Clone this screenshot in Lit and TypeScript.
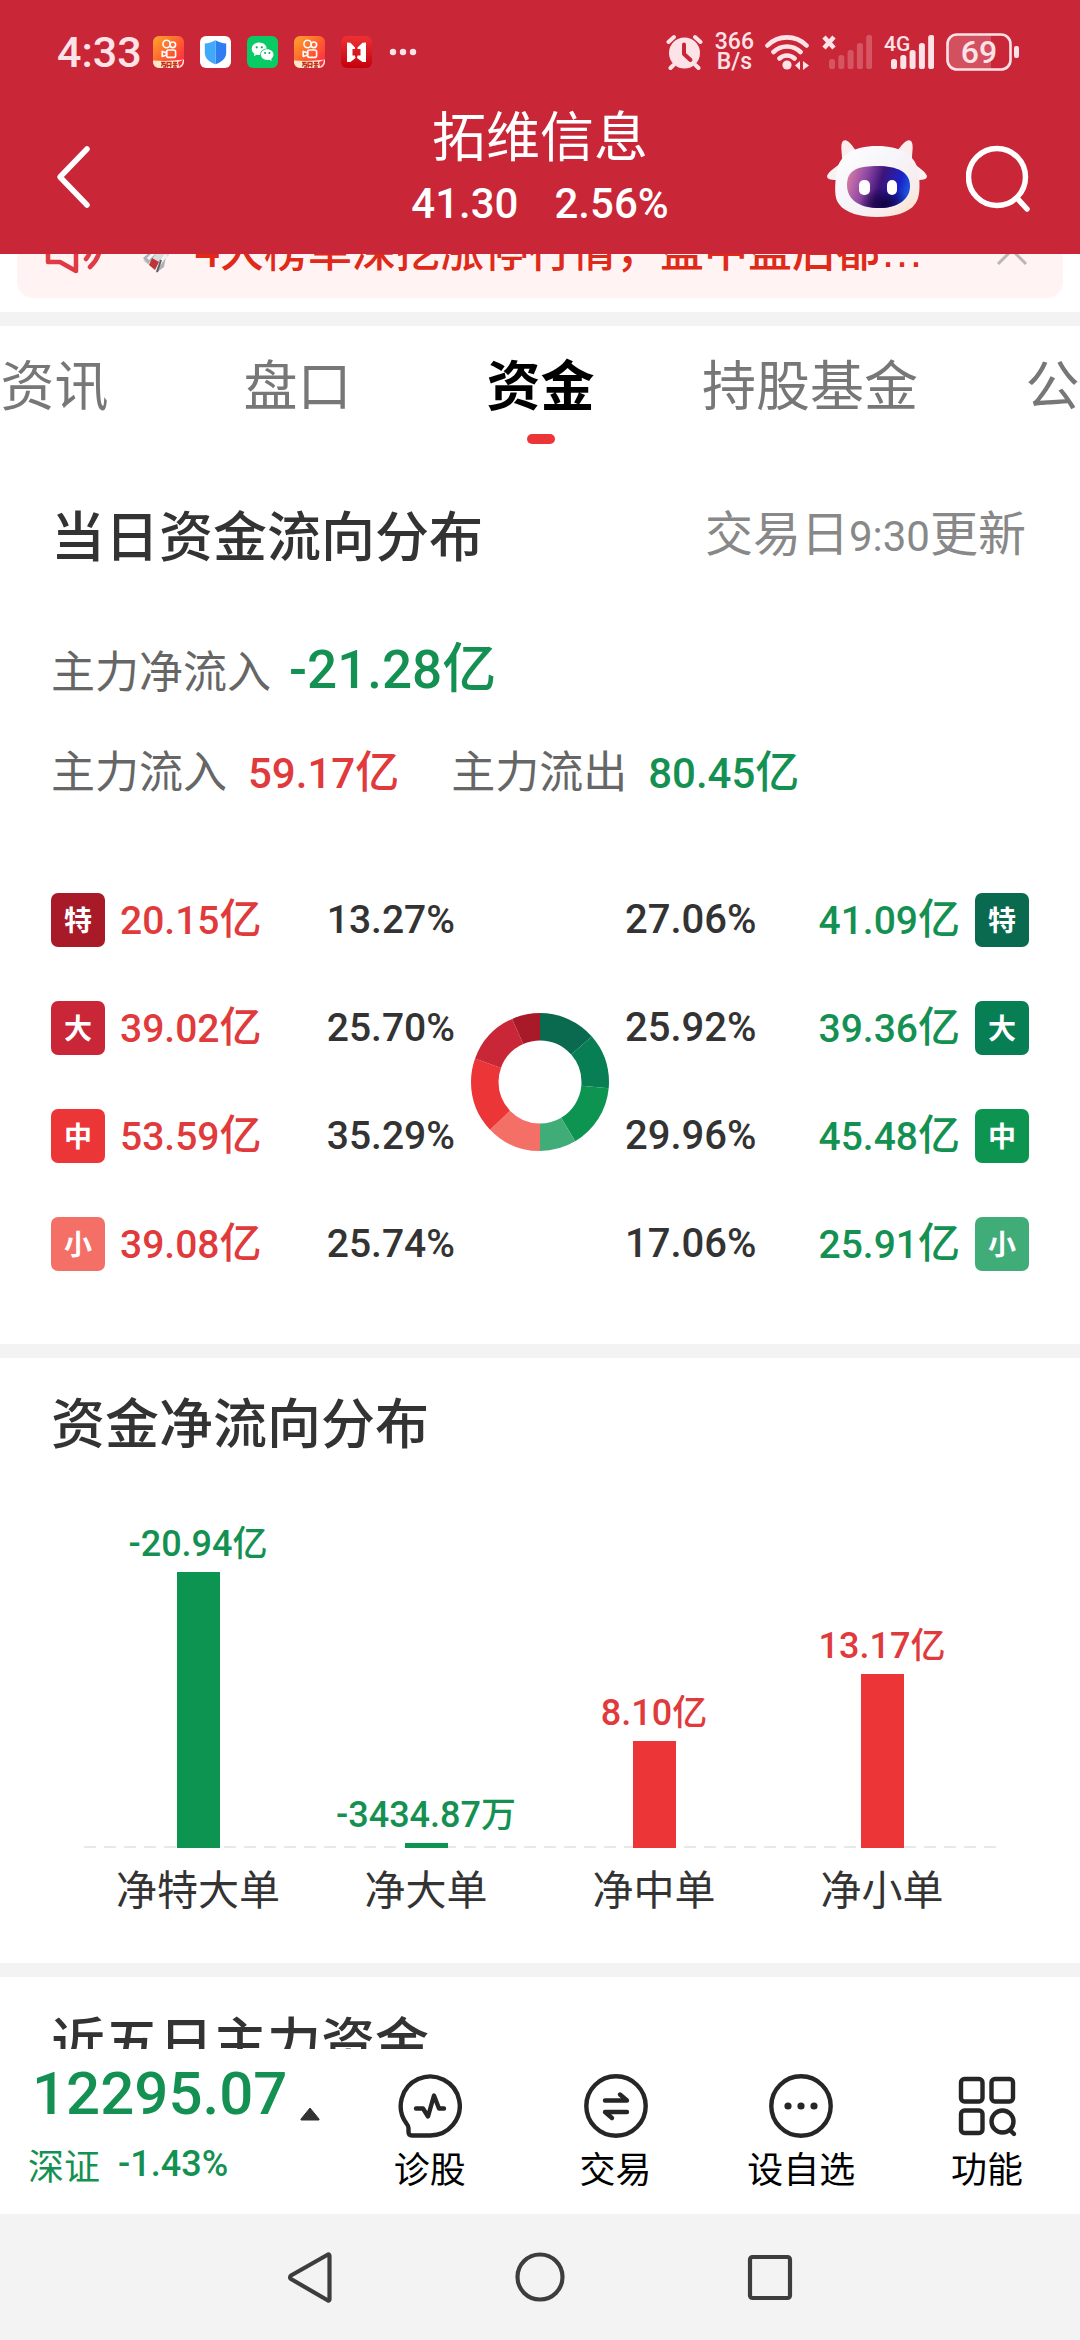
import { LitElement, html, svg, css, nothing } from "lit";
import { customElement, property, state } from "lit/decorators.js";
import { classMap } from "lit/directives/class-map.js";

type Tone = "up" | "down";
interface Flow { size: string; tier: number; amount: string; share: number; }
interface Net { label: string; value: number; amount: string; unit: string; }

const INFLOW: Flow[] = [
  { size: "特", tier: 1, amount: "20.15", share: 13.27 },
  { size: "大", tier: 2, amount: "39.02", share: 25.7 },
  { size: "中", tier: 3, amount: "53.59", share: 35.29 },
  { size: "小", tier: 4, amount: "39.08", share: 25.74 },
];
const OUTFLOW: Flow[] = [
  { size: "特", tier: 1, amount: "41.09", share: 27.06 },
  { size: "大", tier: 2, amount: "39.36", share: 25.92 },
  { size: "中", tier: 3, amount: "45.48", share: 29.96 },
  { size: "小", tier: 4, amount: "25.91", share: 17.06 },
];
const NET: Net[] = [
  { label: "净特大单", value: -20.94, amount: "-20.94", unit: "亿" },
  { label: "净大单", value: -0.343487, amount: "-3434.87", unit: "万" },
  { label: "净中单", value: 8.1, amount: "8.10", unit: "亿" },
  { label: "净小单", value: 13.17, amount: "13.17", unit: "亿" },
];
const TIER_COLORS: Record<Tone, string[]> = {
  up: ["#a91a29", "#c92637", "#ec3537", "#f47067"],
  down: ["#0a6a50", "#077e53", "#0e9451", "#40ad78"],
};

const base = css`
  :host { display: block; box-sizing: border-box; }
  * { box-sizing: border-box; }
  svg { display: block; flex: none; }
  button {
    border: 0; padding: 0; margin: 0; background: none; color: inherit;
    font: inherit; cursor: pointer;
  }
  h1, h2, p { margin: 0; font-weight: inherit; font-size: inherit; }
  .num { font-family: Roboto, "Noto Sans CJK SC", sans-serif; font-weight: 500; }
  .up { color: #e03a3c; }
  .down { color: #149152; }
`;

const kuaishou = svg`
  <defs><linearGradient id="ks" x1="0" y1="0" x2="1" y2="1">
    <stop offset="0" stop-color="#ffa62b"/><stop offset=".55" stop-color="#ff5a30"/><stop offset="1" stop-color="#fb1f4b"/>
  </linearGradient></defs>
  <rect width="31" height="32" rx="6" fill="url(#ks)"/>
  <g fill="none" stroke="#fff" stroke-width="1.6">
    <circle cx="13.6" cy="8" r="3.7"/><circle cx="19.8" cy="8.8" r="2.8"/>
    <rect x="13.6" y="14" width="9" height="7.4" rx="2"/>
    <path d="M9.2 15.4v5l4.4-1.4v-2.2z" stroke-linejoin="round"/>
  </g>
  <path d="M0 24.5q16 1.2 31-1v2.5a6 6 0 0 1-6 6H6a6 6 0 0 1-6-6z" fill="#fde7c8"/>
  <path d="M8 26.500h4.500M10 26.500l-1.500 4M10 28.500h2.500v2.500h-2.500M14 26.500h4v3h-4zM15 29.500l-1 2M17 29.500l1 2M20 26.500h4M19.500 28.500h5M20 31h4M22 26v5" stroke="#c2301c" stroke-width="1.300" fill="none"/>
  <path d="M25 26l5-2-1 4-3 3z" fill="#fb2a48"/>`;
const shield = svg`
  <rect width="31" height="32" rx="6" fill="#fff"/>
  <path d="M15.500 4.200c3.500 2 7 3 10.700 3.300v9.500c0 5.500-5 9.300-10.700 11.200z" fill="#2f7df0"/>
  <path d="M15.500 4.200c-3.500 2-7 3-10.700 3.300v9.500c0 5.500 5 9.300 10.700 11.200z" fill="#41aaf8"/>`;
const wechat = svg`
  <rect width="31" height="32" rx="6" fill="#08cb66"/>
  <path d="M12.200 6.500c-4.200 0-7.500 2.800-7.500 6.300 0 2 1 3.700 2.700 4.900l-.6 2.500 2.900-1.500c.8.200 1.600.3 2.500.3 4.200 0 7.500-2.700 7.500-6.200s-3.300-6.300-7.500-6.300z" fill="#fff"/>
  <ellipse cx="20" cy="18.600" rx="7" ry="6.200" fill="#08cb66"/>
  <path d="M20.200 13.200c-3.600 0-6.400 2.400-6.400 5.400s2.800 5.400 6.400 5.400c.8 0 1.500-.1 2.200-.3l2.300 1.200-.5-2c1.400-1 2.300-2.600 2.300-4.300 0-3-2.800-5.400-6.300-5.400z" fill="#fff"/>
  <g fill="#08a956"><circle cx="9.700" cy="11.300" r="1.100"/><circle cx="14.800" cy="11.300" r="1.100"/><circle cx="18.100" cy="17" r="1"/><circle cx="22.400" cy="17" r="1"/></g>`;
const news = svg`
  <defs><linearGradient id="nw" x1="0" y1="0" x2="0" y2="1">
    <stop offset="0" stop-color="#ee3034"/><stop offset="1" stop-color="#c4000c"/>
  </linearGradient></defs>
  <rect width="31" height="32" rx="6" fill="url(#nw)"/>
  <path d="M6 6.500l3.500.3L14 11.500v1.500h-2.500v6.500H14l.5 2.500-5 4L6 26zM25 6.500l-3.500.3L16.500 11.500v1.500h3v6.500h-3l-.5 2.500 5.500 4L25 26z" fill="#fff"/>`;

@customElement("status-bar")
class StatusBar extends LitElement {
  static styles = [base, css`
    .bar {
      display: flex; align-items: center; justify-content: space-between;
      height: 104px; padding: 0 60px 0 57px; color: #fde3e8;
      font-family: Roboto, sans-serif; font-weight: 500;
    }
    .side { display: flex; align-items: center; }
    .time { font-size: 43px; line-height: 46px; margin-right: 11px; }
    .apps { display: flex; gap: 16px; margin-right: 17px; }
    .alarm { margin-right: 12px; }
    .speed { display: flex; flex-direction: column; font-size: 23px; line-height: 20px; text-align: center; margin-right: 11px; }
    .wifi { margin-right: 12px; }
    .cell { margin-right: 12px; display: flex; }
    .level { font: 500 32px/32px Roboto, sans-serif; }
  `];
  render() {
    const bars = (opacity: number) => [0, 1, 2, 3, 4].map((i) => {
      const h = [10, 14, 19, 26, 34][i];
      return svg`<rect x=${7 + i * 9.3} y=${35 - h} width="6" height=${h} rx="2.600" opacity=${opacity}/>`;
    });
    return html`
      <div class="bar">
        <div class="side">
          <span class="time">4:33</span>
          <span class="apps">
            ${[kuaishou, shield, wechat, kuaishou, news].map((icon) => html`
              <svg width="31" height="32" viewBox="0 0 31 32" aria-hidden="true">${icon}</svg>`)}
          </span>
          <svg width="30" height="8" viewBox="0 0 30 8" fill="#fde3e8"><circle cx="4" cy="4" r="3.200"/><circle cx="14" cy="4" r="3.200"/><circle cx="24" cy="4" r="3.200"/></svg>
        </div>
        <div class="side">
          <svg class="alarm" width="37" height="36" viewBox="0 0 37 36">
            <circle cx="18.500" cy="19" r="15.500" fill="#fde3e8"/>
            <path d="M2.500 8l5.500-5M34.500 8l-5.500-5M7.500 31l-3 3M29.500 31l3 3" stroke="#fde3e8" stroke-width="4" stroke-linecap="round"/>
            <path d="M18 10.500v9.500l6.500 6" fill="none" stroke="#c92637" stroke-width="4" stroke-linecap="round" stroke-linejoin="round"/>
          </svg>
          <span class="speed"><span>366</span><span>B/s</span></span>
          <svg class="wifi" width="45" height="36" viewBox="0 0 45 36" fill="none" stroke="#fde3e8" stroke-width="4.600" stroke-linecap="round">
            <path d="M2.500 11.500a27.500 27.500 0 0 1 39 0M8.500 18a19.500 19.500 0 0 1 27 0M14.500 24.500a11 11 0 0 1 15 0"/>
            <circle cx="22" cy="31" r="4.600" fill="#fde3e8" stroke="none"/>
            <path d="M30 31.500l5-4.500v9zM44 31.500l-6-4.500v9z" fill="#fde3e8" stroke="none"/>
          </svg>
          <svg class="cell" width="50" height="36" viewBox="0 0 50 36" fill="#fde3e8">
            <path d="M2 3l10 11M12 3L2 14" stroke="#fde3e8" stroke-width="4.500"/>${bars(0.25)}
          </svg>
          <svg class="cell" width="50" height="36" viewBox="0 0 50 36" fill="#fde3e8">
            <text x="0" y="17" font-family="Roboto, sans-serif" font-size="21" font-weight="500">4G</text>${bars(1)}
          </svg>
          <svg width="74" height="38" viewBox="0 0 74 38">
            <path d="M10 1.500h35v35h-35a8.500 8.500 0 0 1-8.500-8.500v-18a8.500 8.500 0 0 1 8.500-8.500z" fill="#fff" opacity=".2"/>
            <rect x="1.500" y="1.500" width="63" height="35" rx="9.500" fill="none" stroke="#fde3e8" stroke-width="2.600"/>
            <rect x="68" y="13" width="5" height="12" rx="2" fill="#fde3e8"/>
            <text class="level" x="33" y="30" text-anchor="middle" fill="#fde3e8">69</text>
          </svg>
        </div>
      </div>`;
  }
}

@customElement("stock-header")
class StockHeader extends LitElement {
  static styles = [base, css`
    :host { background: #c92637; color: #fff; }
    .nav {
      display: grid; grid-template-columns: 1fr auto 1fr; align-items: center;
      min-height: 150px; padding: 0 48px;
    }
    .title { text-align: center; padding-bottom: 22px; }
    h1 { font-size: 54px; line-height: 60px; }
    .quote { display: flex; justify-content: center; gap: 36px; font-size: 42px; line-height: 56px; margin-top: 12px; }
    .actions { display: flex; justify-content: flex-end; align-items: center; gap: 36px; }
  `];
  render() {
    return html`
      <status-bar></status-bar>
      <div class="nav">
        <div>
          <button aria-label="返回">
            <svg width="50" height="64" viewBox="0 0 50 64" fill="none" stroke="#fff" stroke-width="5.500" stroke-linecap="round" stroke-linejoin="round"><path d="M39 4L12 32l27 28"/></svg>
          </button>
        </div>
        <div class="title">
          <h1>拓维信息</h1>
          <p class="quote num"><span>41.30</span><span>2.56%</span></p>
        </div>
        <div class="actions">
          <button aria-label="智能助手">
            <svg width="104" height="80" viewBox="0 0 104 80">
              <defs>
                <linearGradient id="face" x1="0" y1=".2" x2="1" y2=".4">
                  <stop offset="0" stop-color="#d97fa6"/><stop offset=".3" stop-color="#9048a4"/><stop offset=".55" stop-color="#3d1478"/><stop offset=".85" stop-color="#1a23c8"/><stop offset="1" stop-color="#1c52d8"/>
                </linearGradient>
                <radialGradient id="dark" cx=".6" cy=".9" r=".4"><stop offset="0" stop-color="#12003a"/><stop offset="1" stop-color="#12003a" stop-opacity="0"/></radialGradient>
                <linearGradient id="head" x1="0" y1="0" x2="1" y2="1">
                  <stop offset="0" stop-color="#fff"/><stop offset=".4" stop-color="#f6f6fa"/><stop offset=".75" stop-color="#f7ecee"/><stop offset="1" stop-color="#ffe0bb"/>
                </linearGradient>
              </defs>
              <path d="M16 22C12 28 3 31 1 37c0 4 5 4 12 4zM86 22c4 6 13 9 15 15 0 4-5 4-12 4z" fill="#f8f2f3"/>
              <path d="M16 20c0-8-2-14 1-18 4-3 9 4 13 10zM86 20c0-8 2-14-1-18-4-3-9 4-14 10z" fill="#fbeeee"/>
              <path d="M51 7c24 0 40 9 42 29 1 12 1 23-4 29-6 9-22 13-38 13s-32-4-38-13c-5-6-4-17-3-29C12 16 27 7 51 7z" fill="url(#head)"/>
              <path d="M52 27c19 0 32 6 32 20S71 69 53 69 21 62 21 46s12-19 31-19z" fill="url(#face)"/>
              <path d="M52 27c19 0 32 6 32 20S71 69 53 69 21 62 21 46s12-19 31-19z" fill="url(#dark)"/>
              <rect x="33" y="41" width="11" height="15" rx="5" fill="#fff"/><rect x="61" y="41" width="10" height="15" rx="5" fill="#fff"/>
            </svg>
          </button>
          <button aria-label="搜索">
            <svg width="66" height="68" viewBox="0 0 66 68" fill="none" stroke="#fff" stroke-width="5.500" stroke-linecap="round"><circle cx="31" cy="32" r="28.500"/><path d="M51 53l10 11"/></svg>
          </button>
        </div>
      </div>`;
  }
}

@customElement("notice-bar")
class NoticeBar extends LitElement {
  static styles = [base, css`
    :host { padding: 0 17px 14px; background: #fff; }
    .clip { display: flex; align-items: flex-end; height: 44px; overflow: hidden; }
    .notice {
      flex: 1; display: flex; align-items: center; height: 96px; padding: 0 34px 0 26px;
      background: #fff4f3; border-radius: 16px; color: #df2a1a;
    }
    .text { flex: 1; font-size: 44px; line-height: 60px; font-weight: 500; white-space: nowrap; }
    .more { font-family: "Liberation Sans", sans-serif; }
    .rocket { margin: 0 18px 0 36px; }
  `];
  render() {
    return html`<div class="clip"><div class="notice">
      <svg width="62" height="50" viewBox="0 0 62 50" fill="none" stroke="#e03a44" stroke-width="4.500" stroke-linejoin="round" stroke-linecap="round">
        <path d="M5 14h12L33 4v42L17 37H5zM43 34q7-8 3-20M47 42q15-14 8-35" />
      </svg>
      <svg class="rocket" width="36" height="50" viewBox="0 0 36 50">
        <path d="M34 2C22 4 14 14 10 26l12 8C30 26 36 14 34 2z" fill="#d5d8da"/>
        <path d="M30 8L28 30 14 44 2 36 10 26z" fill="#d9dbdc"/>
        <path d="M2 33l8-7 5 3-8 10zM15 48l3-13 7-4-2 11z" fill="#aeb2b4"/>
        <path d="M7 34l8-8M16 42l9-12" stroke="#f4f4f4" stroke-width="3"/>
        <path d="M11 33l7 4-4 8-6-5z" fill="#bf3438"/><path d="M20 35l-4 12" stroke="#5c6063" stroke-width="2"/>
      </svg>
      <span class="text">4大榜单深挖涨停行情，盘中盘后都<span class="more">…</span></span>
      <button aria-label="关闭"><svg width="34" height="34" viewBox="0 0 34 34" stroke="#bdb6b6" stroke-width="3"><path d="M3 3l28 28M31 3L3 31"/></svg></button>
    </div></div>`;
  }
}

@customElement("flow-donut")
class FlowDonut extends LitElement {
  static styles = [base];
  render() {
    const parts = [
      ...OUTFLOW.map((f, i) => ({ share: f.share, color: TIER_COLORS.down[i] })),
      ...INFLOW.map((f, i) => ({ share: f.share, color: TIER_COLORS.up[i] })).reverse(),
    ];
    let start = 0;
    return html`<svg width="138" height="138" viewBox="-69 -69 138 138" role="img" aria-label="资金流向占比">
      <g transform="rotate(-90)" fill="none" stroke-width="27.500">
        ${parts.map((p) => {
          const arc = svg`<circle r="55.250" pathLength="200" stroke=${p.color} stroke-dasharray="${p.share} 200" stroke-dashoffset=${-start}/>`;
          start += p.share;
          return arc;
        })}
      </g></svg>`;
  }
}

@customElement("flow-table")
class FlowTable extends LitElement {
  @property() tone: Tone = "up";
  @property({ attribute: false }) rows: Flow[] = [];
  static styles = [base, css`
    table { width: 100%; border-collapse: collapse; }
    tr { height: 108px; }
    th, td { padding: 0; font-weight: inherit; vertical-align: middle; }
    th { width: 54px; }
    .badge {
      display: flex; align-items: center; justify-content: center; width: 54px; height: 54px;
      border-radius: 7px; color: #fff; font-size: 28px; line-height: 28px; font-weight: 700; padding-bottom: 3px;
    }
    .amount { font-size: 39px; line-height: 54px; white-space: nowrap; font-weight: 500; }
    .unit { font-size: 42px; }
    .share { font-size: 39px; line-height: 54px; color: #333; font-weight: 500; }
    .in .amount { text-align: left; padding-left: 15px; }
    .in .share { text-align: right; }
    .out .amount { text-align: right; padding-right: 15px; }
    .out .share { text-align: left; font-size: 40px; }
    .up.t1 { background: #a91a29; } .up.t2 { background: #c92637; }
    .up.t3 { background: #ec3537; } .up.t4 { background: #f47067; }
    .down.t1 { background: #0a6a50; } .down.t2 { background: #077e53; }
    .down.t3 { background: #0e9451; } .down.t4 { background: #40ad78; }
    .badge.up, .badge.down { color: #fff; }
  `];
  render() {
    const inflow = this.tone === "up";
    return html`<table class=${inflow ? "in" : "out"}>
      ${this.rows.map((r) => {
        const cells = [
          html`<th scope="row"><span class=${classMap({ badge: true, [this.tone]: true, ["t" + r.tier]: true })}>${r.size}</span></th>`,
          html`<td class="amount num ${this.tone}">${r.amount}<span class="unit">亿</span></td>`,
          html`<td class="share num">${r.share.toFixed(2)}%</td>`,
        ];
        return html`<tr>${inflow ? cells : cells.reverse()}</tr>`;
      })}
    </table>`;
  }
}

@customElement("net-chart")
class NetChart extends LitElement {
  static styles = [base, css`
    :host { padding: 0 84px; }
    .plot {
      display: grid; grid-template-columns: repeat(4, 1fr); align-items: end; min-height: 360px;
      background: repeating-linear-gradient(90deg, #e8e8e8 0 12px, transparent 12px 20px) left bottom / 100% 2px no-repeat;
    }
    .col { display: flex; flex-direction: column; align-items: center; }
    .value { font-size: 36px; line-height: 54px; white-space: nowrap; }
    .unit { font-size: 35px; }
    .bar { width: 43px; }
    .bar.up { background: #ec3537; }
    .bar.down { background: #0e9451; }
    .axis { display: grid; grid-template-columns: repeat(4, 1fr); text-align: center; font-size: 41px; line-height: 60px; color: #333; padding-top: 9px; }
  `];
  render() {
    const peak = Math.max(...NET.map((n) => Math.abs(n.value)));
    return html`
      <div class="plot">
        ${NET.map((n) => {
          const tone = n.value < 0 ? "down" : "up";
          const h = Math.round((Math.abs(n.value) / peak) * 276);
          return html`<div class="col">
            <span class="value num ${tone}">${n.amount}<span class="unit">${n.unit}</span></span>
            <div class="bar ${tone}" style="height:${h}px"></div>
          </div>`;
        })}
      </div>
      <div class="axis">${NET.map((n) => html`<span>${n.label}</span>`)}</div>`;
  }
}

const toolIcons = {
  diagnose: svg`<path d="M32 61.500H14q-3.500 0-3.500-3.500v-4q0-2-2-4.500A29.500 29.500 0 1 1 32 61.500z"/><path d="M18 34.500h7l5 8 6-21 5 13h5"/>`,
  trade: svg`<circle cx="32" cy="32" r="29.700"/><path d="M21 26.500h22l-7-6M43 38H21l7 6"/>`,
  more: svg`<circle cx="32" cy="32" r="29.700"/><g fill="#262626" stroke="none"><circle cx="19" cy="32" r="3.600"/><circle cx="32" cy="32" r="3.600"/><circle cx="45" cy="32" r="3.600"/></g>`,
  features: svg`<rect x="6" y="5" width="21.500" height="22.500" rx="3.500"/><rect x="36.500" y="5" width="21.500" height="22.500" rx="3.500"/><rect x="6" y="36.500" width="21.500" height="22.500" rx="3.500"/><circle cx="47.500" cy="47.500" r="11"/><path d="M55 56l4 4"/>`,
};

@customElement("bottom-bar")
class BottomBar extends LitElement {
  static styles = [base, css`
    .tools { display: flex; min-height: 165px; background: #fff; }
    .index { width: 337px; flex: none; padding: 0 0 9px 28px; text-align: left; color: #149152; }
    .line { display: flex; align-items: flex-end; gap: 13px; }
    .points { font-size: 60px; line-height: 64px; padding-left: 4px; }
    .change { display: flex; align-items: center; gap: 18px; font-size: 36px; line-height: 56px; margin-top: 10px; }
    .tool {
      flex: 1; display: flex; flex-direction: column; align-items: center;
      padding-top: 25px; gap: 3px; font-size: 36px; line-height: 52px; color: #000;
    }
    .arrow { margin-bottom: 5px; }
    .system { display: flex; justify-content: center; align-items: center; gap: 166px; height: 126px; background: #f3f3f3; }
  `];
  render() {
    const tools = [["诊股", toolIcons.diagnose], ["交易", toolIcons.trade], ["设自选", toolIcons.more], ["功能", toolIcons.features]];
    return html`
      <div class="tools">
        <button class="index">
          <span class="line"><span class="points num">12295.07</span>
            <svg class="arrow" width="20" height="14" viewBox="0 0 20 14"><path d="M10 1l9 11v1H1v-1z" fill="#333" stroke="#333" stroke-linejoin="round"/></svg></span>
          <span class="change"><span>深证</span><span class="num">-1.43%</span></span>
        </button>
        ${tools.map(([label, icon]) => html`<button class="tool">
          <svg width="64" height="64" viewBox="0 0 64 64" fill="none" stroke="#262626" stroke-width="4.400" stroke-linecap="round" stroke-linejoin="round">${icon}</svg>
          <span>${label}</span></button>`)}
      </div>
      <div class="system">
        <button aria-label="返回上一页"><svg width="64" height="64" viewBox="0 0 64 64" fill="none" stroke="#3d3d3d" stroke-width="4.200" stroke-linejoin="round"><path d="M13 30.500L50 9.500q1.500-.5 1.500 1.500v43q0 2-1.500 1.500L13 34q-2-1.500 0-3.500z"/></svg></button>
        <button aria-label="主屏幕"><svg width="64" height="64" viewBox="0 0 64 64" fill="none" stroke="#3d3d3d" stroke-width="4.200"><circle cx="32" cy="32" r="22.500"/></svg></button>
        <button aria-label="最近任务"><svg width="64" height="64" viewBox="0 0 64 64" fill="none" stroke="#3d3d3d" stroke-width="4.200"><rect x="12" y="12" width="40" height="41" rx="2.500"/></svg></button>
      </div>`;
  }
}

@customElement("app-root")
class AppRoot extends LitElement {
  @state() private active = "资金";
  static styles = [base, css`
    :host {
      display: flex; flex-direction: column; height: 100vh; overflow: hidden; background: #fff;
      font-family: "Noto Sans CJK SC", sans-serif; color: #333;
    }
    stock-header, bottom-bar { flex: none; }
    main { flex: 1; min-height: 0; overflow: hidden; background: #f3f3f3; display: flex; flex-direction: column; gap: 14px; }
    main > * { flex: none; }
    section { background: #fff; }
    .tabs { display: flex; align-items: flex-start; margin-left: -67px; overflow: hidden; padding-bottom: 46px; color: #777; }
    .tab {
      flex: none; display: flex; flex-direction: column; align-items: center; min-width: 243px; padding: 23px 40px 0;
      font-size: 54px; line-height: 68px;
    }
    .tab.active { color: #000; font-weight: 700; }
    .marker { width: 28px; height: 10px; border-radius: 5px; background: #ec3537; margin-top: 17px; }
    .head { display: flex; justify-content: space-between; align-items: center; padding: 0 54px 0 51px; line-height: 80px; }
    h2 { font-size: 54px; font-weight: 500; line-height: 80px; }
    .note { font-size: 48px; color: #888; }
    .clock { font-family: Roboto, sans-serif; font-size: 42px; }
    .sum { display: flex; align-items: baseline; padding: 0 51px; font-size: 44px; color: #666; line-height: 64px; }
    .net { margin-top: 60px; }
    .both { margin-top: 35px; }
    .big { font-size: 53px; margin-left: 18px; }
    .big .unit { font-size: 54px; }
    .mid { font-size: 42px; margin-left: 21px; }
    .mid .unit { font-size: 44px; }
    .gap { margin-left: 52px; }
    .flows { display: grid; grid-template-columns: 1fr 138px 1fr; gap: 16px; align-items: center; padding: 60px 51px 46px; }
    .second { padding: 23px 0 20px; }
    .second net-chart { margin-top: 27px; padding-bottom: 26px; }
    .third { padding-top: 23px; }
  `];
  render() {
    return html`
      <stock-header></stock-header>
      <main>
        <notice-bar></notice-bar>
        <section>
          <div class="tabs" role="tablist">
            ${["资讯", "盘口", "资金", "持股基金", "公告"].map((t) => html`
              <button role="tab" aria-selected=${t === this.active} class=${classMap({ tab: true, active: t === this.active })}
                @click=${() => (this.active = t)}>${t}${t === this.active ? html`<span class="marker"></span>` : nothing}</button>`)}
          </div>
          <div class="head"><h2>当日资金流向分布</h2><span class="note">交易日<span class="clock">9:30</span>更新</span></div>
          <p class="sum net">主力净流入<span class="num down big">-21.28<span class="unit">亿</span></span></p>
          <p class="sum both">主力流入<span class="num up mid">59.17<span class="unit">亿</span></span>
            <span class="gap">主力流出</span><span class="num down mid">80.45<span class="unit">亿</span></span></p>
          <div class="flows">
            <flow-table tone="up" .rows=${INFLOW}></flow-table>
            <flow-donut></flow-donut>
            <flow-table tone="down" .rows=${OUTFLOW}></flow-table>
          </div>
        </section>
        <section class="second">
          <div class="head"><h2>资金净流向分布</h2></div>
          <net-chart></net-chart>
        </section>
        <section class="third">
          <div class="head"><h2>近五日主力资金</h2></div>
        </section>
      </main>
      <bottom-bar></bottom-bar>`;
  }
}
